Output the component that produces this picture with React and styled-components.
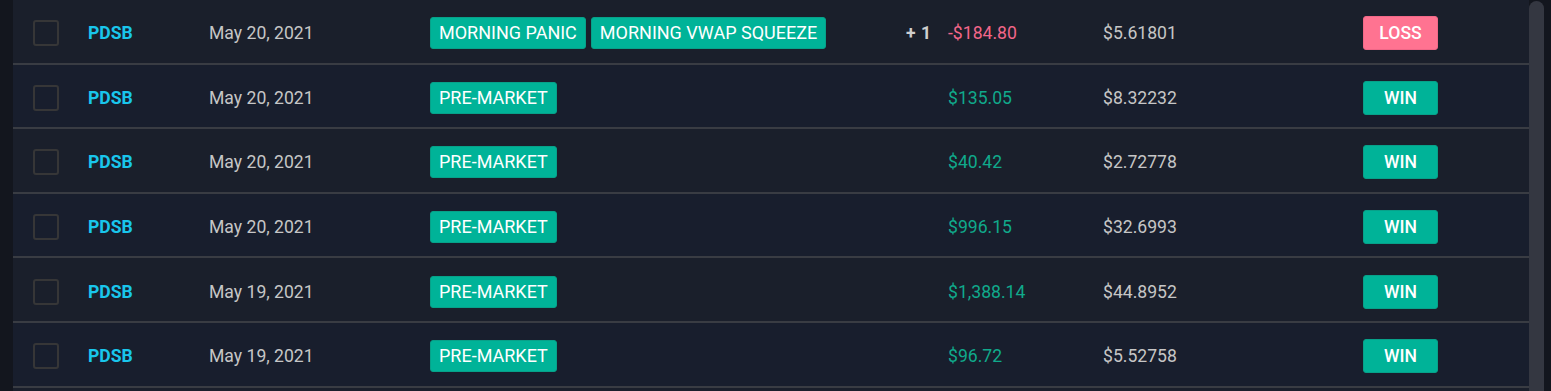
import React from "react";
import styled, { createGlobalStyle } from "styled-components";

const GlobalStyle = createGlobalStyle`
	html, body {
		margin: 0;
		padding: 0;
		background: #13161e;
		overflow: hidden;
	}
	body {
		font-family: Roboto, "Liberation Sans", Arial, sans-serif;
	}
`;

const Page = styled.div`
	display: flex;
	height: 391px;
	padding-left: 13px;
	padding-right: 7px;
	overflow: hidden;
`;

const Table = styled.div`
	flex: 1;
	background: #1a1f2b;
	overflow: hidden;
`;

const ScrollThumb = styled.div`
	width: 15px;
	margin-top: 1px;
	background: #343741;
	border-radius: 8px 8px 0 0;
`;

const Row = styled.div`
	display: grid;
	grid-template-columns: 75px 121px 221px 518px 155px 260px 1fr;
	align-items: center;
	height: 58.6px;
	padding-top: 4px;
	border-bottom: 2px solid #393c43;
	background: ${(p) => (p.$even ? "#181e2d" : "#1a1f2b")};
	font-size: 17.6px;
`;

const CheckCell = styled.div`
	padding-left: 20px;
	display: flex;
`;

const Checkbox = styled.span`
	width: 22px;
	height: 22px;
	border: 2px solid #363637;
	border-radius: 3px;
`;

const Symbol = styled.div`
	color: #19c6ec;
	font-weight: 700;
`;

const DateCell = styled.div`
	color: #c6c6c6;
`;

const TagCell = styled.div`
	display: flex;
	align-items: center;
	padding-right: 17px;
`;

const Tags = styled.div`
	display: flex;
	gap: 5px;
	flex: 1;
`;

const Tag = styled.span`
	background: #00b398;
	border: 1px solid #07a189;
	border-radius: 3px;
	color: #fff;
	padding: 0 8px;
	height: 30px;
	line-height: 30px;
	font-size: 18px;
`;

const More = styled.span`
	color: #cfcfcf;
	font-weight: 700;
	font-size: 17.6px;
	word-spacing: 1px;
`;

const Amount = styled.div`
	color: ${(p) => (p.$neg ? "#f26689" : "#10a98b")};
`;

const Price = styled.div`
	color: #c6c6c6;
`;

const ResultCell = styled.div`
	display: flex;
`;

const Result = styled.span`
	width: 73px;
	height: 32px;
	line-height: 32px;
	text-align: center;
	border-radius: 3px;
	border: 1px solid ${(p) => (p.$loss ? "#f06888" : "#07a189")};
	background: ${(p) => (p.$loss ? "#ff7391" : "#00b398")};
	color: #fff;
	font-size: 17.6px;
	font-weight: 500;
`;

const trades = [
	{ symbol: "PDSB", date: "May 20, 2021", tags: ["MORNING PANIC", "MORNING VWAP SQUEEZE"], more: 1, amount: -184.8, price: "$5.61801" },
	{ symbol: "PDSB", date: "May 20, 2021", tags: ["PRE-MARKET"], amount: 135.05, price: "$8.32232" },
	{ symbol: "PDSB", date: "May 20, 2021", tags: ["PRE-MARKET"], amount: 40.42, price: "$2.72778" },
	{ symbol: "PDSB", date: "May 20, 2021", tags: ["PRE-MARKET"], amount: 996.15, price: "$32.6993" },
	{ symbol: "PDSB", date: "May 19, 2021", tags: ["PRE-MARKET"], amount: 1388.14, price: "$44.8952" },
	{ symbol: "PDSB", date: "May 19, 2021", tags: ["PRE-MARKET"], amount: 96.72, price: "$5.52758" },
];

const money = (v) => {
	const s = "$" + Math.abs(v).toLocaleString("en-US", { minimumFractionDigits: 2, maximumFractionDigits: 2 });
	return v < 0 ? "-" + s : s;
};

const App = () => {
	return <>
		<GlobalStyle />
		<Page>
			<Table>
				{trades.map((t, i) => (
					<Row key={i} $even={i % 2 === 1}>
						<CheckCell><Checkbox /></CheckCell>
						<Symbol>{t.symbol}</Symbol>
						<DateCell>{t.date}</DateCell>
						<TagCell>
							<Tags>
								{t.tags.map((tag) => <Tag key={tag}>{tag}</Tag>)}
							</Tags>
							{t.more && <More>+ {t.more}</More>}
						</TagCell>
						<Amount $neg={t.amount < 0}>{money(t.amount)}</Amount>
						<Price>{t.price}</Price>
						<ResultCell>
							<Result $loss={t.amount < 0}>{t.amount < 0 ? "LOSS" : "WIN"}</Result>
						</ResultCell>
					</Row>
				))}
			</Table>
			<ScrollThumb />
		</Page>
	</>
}

export default App;
